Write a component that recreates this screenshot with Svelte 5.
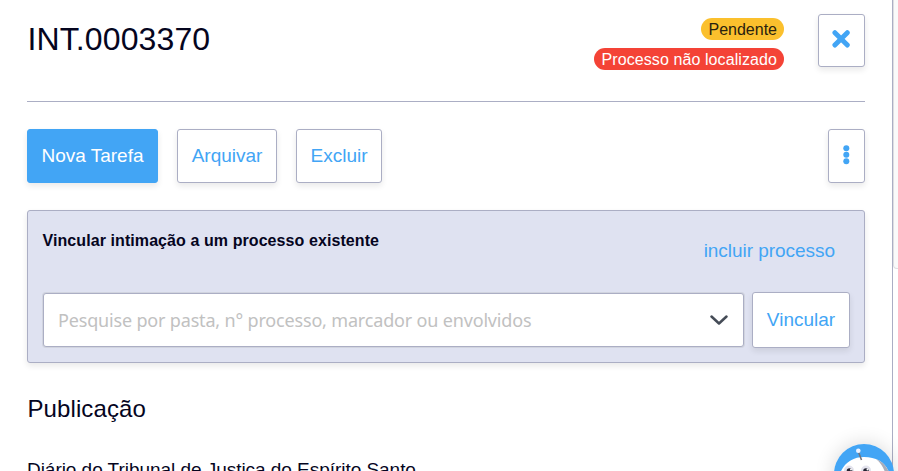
<script>
  let query = $state('');
</script>

<div class="page">
  <main>
    <header>
      <h1>INT.0003370</h1>
      <div class="badges">
        <span class="badge pending">Pendente</span>
        <span class="badge missing">Processo não localizado</span>
      </div>
      <button class="btn close" aria-label="Fechar">
        <svg width="19" height="18" viewBox="0 0 19 18"><path d="M2.900 2.700 15.300 15.100M15.300 2.700 2.900 15.100" stroke="#42a5f5" stroke-width="4.900" stroke-linecap="round" /></svg>
      </button>
    </header>

    <div class="actions">
      <button class="btn primary">Nova Tarefa</button>
      <button class="btn archive">Arquivar</button>
      <button class="btn delete">Excluir</button>
      <button class="btn more" aria-label="Mais opções">
        <svg width="7" height="20" viewBox="0 0 7 20" fill="#42a5f5"><circle cx="3.3" cy="3.3" r="3" /><circle cx="3.3" cy="9.8" r="3" /><circle cx="3.3" cy="16.3" r="3" /></svg>
      </button>
    </div>

    <section class="link-box">
      <div class="link-head">
        <strong>Vincular intimação a um processo existente</strong>
        <a href="#incluir">incluir processo</a>
      </div>
      <div class="search">
        <div class="select">
          <input bind:value={query} placeholder="Pesquise por pasta, n° processo, marcador ou envolvidos" />
          <svg width="18" height="11" viewBox="0 0 18 11" fill="none"><path d="M1.5 1.5 9 8.500 16.5 1.5" stroke="#454c57" stroke-width="2.5" stroke-linecap="round" stroke-linejoin="round" /></svg>
        </div>
        <button class="btn link">Vincular</button>
      </div>
    </section>

    <h2>Publicação</h2>
    <p>Diário do Tribunal de Justiça do Espírito Santo</p>
  </main>
  <aside><div></div></aside>

  <div class="bot">
    <svg width="60" height="60" viewBox="0 0 60 60">
      <circle cx="30" cy="30" r="30" fill="#42a5f5" />
      <path d="M4 38C6 21 17 13 30 13C46 13 56 22 57 38L50 60H10Z" fill="#fff" />
      <path d="M42 15C50 18 55.500 25 57 36L51 28C49 23 47 19 42 15Z" fill="#a9adba" />
      <path d="M24.500 8 27.500 16" stroke="#70737c" stroke-width="1.600" />
      <circle cx="24.300" cy="6.700" r="2.300" fill="#edf2ff" />
      <circle cx="15" cy="26.500" r="5" fill="#e3e3ed" /><circle cx="32" cy="26.500" r="5" fill="#e3e3ed" />
      <circle cx="15.500" cy="27" r="2.800" fill="#242332" /><circle cx="32" cy="27" r="2.800" fill="#242332" />
      <circle cx="17" cy="25.500" r="1" fill="#fff" /><circle cx="33.500" cy="25.500" r="1" fill="#fff" />
    </svg>
  </div>
</div>

<style>
  :global(body) { overflow: hidden; }
  .page, .page * { box-sizing: border-box; }
  .page {
    display: flex;
    position: relative;
    width: 898px;
    height: 471px;
    overflow: hidden;
    background: #fff;
    color: #05051e;
    font-family: "Liberation Sans", Arial, sans-serif;
  }
  main { width: 892px; flex: none; padding: 0 27px; height: 471px; overflow: hidden; }
  header { display: flex; height: 102px; border-bottom: 1px solid #abaec4; }
  h1 { flex: 1; margin: 20px 0 0; padding-left: 0.5px; font-size: 32px; font-weight: 400; line-height: 38px; letter-spacing: .12px; }
  .badges { display: flex; flex-direction: column; align-items: flex-end; gap: 8px; padding-top: 18px; margin-right: 34px; }
  .badge { height: 22px; padding: 0 7px; border-radius: 11px; font-size: 16px; line-height: 23px; white-space: nowrap; }
  .pending { background: #fbc02d; color: #29220f; }
  .missing { background: #f44336; color: #fff; letter-spacing: .09px; }
  .btn {
    display: flex;
    align-items: center;
    justify-content: center;
    height: 54px;
    padding: 0;
    border: 1px solid #abaec4;
    border-radius: 3px;
    background: #fff;
    color: #42a5f5;
    font: 19px/22px "Liberation Sans", Arial, sans-serif;
    box-shadow: 0 3px 6px rgba(0, 0, 0, .09);
  }
  .close { width: 47px; height: 53px; margin-top: 14px; padding-bottom: 3px; }
  .actions { display: flex; padding-top: 27px; }
  .primary { width: 131px; background: #42a5f5; border-color: #42a5f5; color: #fff; }
  .archive { width: 100px; margin-left: 19px; }
  .delete { width: 86px; margin-left: 19px; }
  .more { width: 37px; margin-left: auto; padding-bottom: 2px; }
  .link-box {
    height: 153px;
    margin-top: 27px;
    padding: 0 14px 0 15px;
    border: 1px solid #abaec4;
    border-radius: 3px;
    background: #dfe2f1;
    box-shadow: 0 3px 6px rgba(0, 0, 0, .09);
  }
  .link-head { display: flex; justify-content: space-between; height: 81px; padding-right: 15px; }
  strong { margin: 20px 0 0 -0.5px; font-size: 16px; line-height: 19px; letter-spacing: .08px; }
  a { margin-top: 29px; color: #42a5f5; font-size: 19px; line-height: 22px; letter-spacing: -.04px; text-decoration: none; }
  .search { display: flex; gap: 8px; }
  .select {
    display: flex;
    align-items: center;
    width: 701px;
    height: 54px;
    margin-top: 1px;
    padding: 0 15px 0 14px;
    border: 1px solid #abaec4;
    border-radius: 3px;
    background: #fff;
    box-shadow: 0 0 0 1px #d1d4df;
  }
  input { flex: 1; min-width: 0; padding: 0; border: 0; outline: 0; background: none; font: 18px "Noto Sans", "Open Sans", sans-serif; letter-spacing: -.17px; }
  input::placeholder { color: #c1c1c1; opacity: 1; }
  .link { width: 98px; height: 56px; }
  h2 { margin: 32px 0 0; padding-left: 0.5px; font-size: 24px; font-weight: 400; line-height: 28px; letter-spacing: .1px; }
  p { margin: 36px 0 0; font-size: 19px; line-height: 22px; letter-spacing: -.04px; white-space: nowrap; }
  aside { flex: 1; border-left: 1px solid #abaec4; }
  aside div { width: 20px; height: 269px; border: 1px solid #dedee2; border-top: 0; border-bottom-left-radius: 4px; background: #fafafa; }
  .bot { position: absolute; left: 834px; top: 444px; width: 60px; height: 60px; border-radius: 50%; box-shadow: 0 0 20px rgba(0, 0, 0, .16); }
  .bot svg { display: block; }
</style>
